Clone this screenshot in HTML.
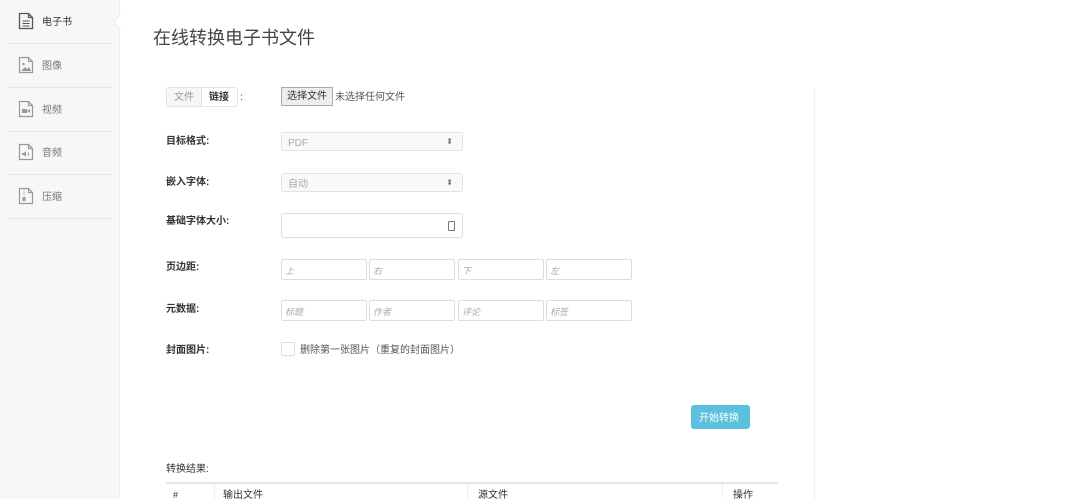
<!DOCTYPE html>
<html><head><meta charset="utf-8"><style>
*{margin:0;padding:0;box-sizing:border-box}
body{width:1079px;height:499px;overflow:hidden;background:#fff;font-family:"Liberation Sans","Noto Sans CJK SC",sans-serif;position:relative;color:#333;line-height:1.4}
.side{position:absolute;left:0;top:0;width:120px;height:499px;background:#f7f7f7;border-right:1px solid #ececec}
.item{position:absolute;left:8px;width:104px;height:44px;border-bottom:1px solid #e6e6e6;font-size:10px;color:#777}
.item span{position:absolute;left:34px;top:16px}
.item svg{position:absolute;left:10px;top:12px}
.notch{position:absolute;left:113px;top:14px;width:0;height:0;border-top:8px solid transparent;border-bottom:8px solid transparent;border-right:8px solid #e6e6e6}
.notch2{position:absolute;left:114px;top:15px;width:0;height:0;border-top:7px solid transparent;border-bottom:7px solid transparent;border-right:7px solid #fff}
.a{position:absolute;white-space:nowrap}
h1{position:absolute;left:153px;top:26px;font-size:18px;font-weight:normal;color:#444;line-height:1.4}
.lbl{position:absolute;left:166px;font-size:10px;font-weight:bold;color:#333}
.sel{position:absolute;left:281px;width:182px;height:19px;border:1px solid #e3e3e3;border-radius:3px;background:#f9f9f9;font-size:10px;color:#aaa;padding:4px 6px;overflow:hidden}
.sel i{position:absolute;right:9px;top:3px;font-style:normal;font-size:8px;color:#777}
.inp{position:absolute;width:86px;height:21px;border:1px solid #ddd;border-radius:2px;font-size:9px;color:#aaa;font-style:italic;padding:5px 3px;overflow:hidden}
</style></head><body>
<div class="side">
<div class="item" style="top:0"><svg width="16" height="18" viewBox="0 0 16 18"><path d="M1.5 1.5h9l4 4v11h-13z M10.5 1.5v4h4" fill="none" stroke="#555" stroke-width="1.3"/><path d="M4.5 9h7M4.5 11.5h7M4.5 14h7" stroke="#555" stroke-width="1.1"/></svg><span style="color:#333">电子书</span></div>
<div class="item" style="top:44px"><svg width="16" height="18" viewBox="0 0 16 18"><path d="M1.5 1.5h9l4 4v11h-13z M10.5 1.5v4h4" fill="none" stroke="#999" stroke-width="1.2"/><circle cx="5.5" cy="8" r="1.3" fill="#999"/><path d="M3 15l4-4 2 2 2-2 2 4z" fill="#999"/></svg><span>图像</span></div>
<div class="item" style="top:88px"><svg width="16" height="18" viewBox="0 0 16 18"><path d="M1.5 1.5h9l4 4v11h-13z M10.5 1.5v4h4" fill="none" stroke="#999" stroke-width="1.2"/><rect x="4" y="9" width="5" height="4" fill="#999"/><path d="M9 11l3-2v4z" fill="#999"/></svg><span>视频</span></div>
<div class="item" style="top:131px"><svg width="16" height="18" viewBox="0 0 16 18"><path d="M1.5 1.5h9l4 4v11h-13z M10.5 1.5v4h4" fill="none" stroke="#999" stroke-width="1.2"/><path d="M4 10h2l2-2v6l-2-2H4z" fill="#999"/><path d="M10 9.5q1 1.5 0 3" fill="none" stroke="#999"/></svg><span>音频</span></div>
<div class="item" style="top:175px"><svg width="16" height="18" viewBox="0 0 16 18"><path d="M1.5 1.5h9l4 4v11h-13z M10.5 1.5v4h4" fill="none" stroke="#999" stroke-width="1.2"/><path d="M6 3v6" stroke="#999" stroke-dasharray="1 1"/><rect x="4.5" y="10" width="3" height="4" fill="#999"/></svg><span>压缩</span></div>
</div>
<div class="notch"></div><div class="notch2"></div>
<h1>在线转换电子书文件</h1>
<div class="a" style="left:814px;top:88px;width:1px;height:411px;background:#eee"></div>
<div class="a" style="left:166px;top:87px;width:72px;height:20px;border:1px solid #e3e3e3;border-radius:3px;font-size:10px;"><span class="a" style="left:0;top:0;width:35px;height:18px;background:#f5f5f5;color:#999;padding:3px 7px;border-right:1px solid #e3e3e3">文件</span><span class="a" style="left:42px;top:3px;color:#333;font-weight:bold">链接</span></div>
<span class="a" style="left:240px;top:91px;font-size:10px">:</span>
<div class="a" style="left:281px;top:87px;width:52px;height:19px;border:1px solid #aaa;background:#eee;font-size:10px;padding:2px 5px;color:#333">选择文件</div>
<span class="a" style="left:335px;top:91px;font-size:10px;color:#555">未选择任何文件</span>
<div class="lbl" style="top:135px">目标格式:</div>
<div class="sel" style="top:132px">PDF<i>⬍</i></div>
<div class="lbl" style="top:176px">嵌入字体:</div>
<div class="sel" style="top:173px">自动<i>⬍</i></div>
<div class="lbl" style="top:215px">基础字体大小:</div>
<div class="a" style="left:281px;top:213px;width:182px;height:25px;border:1px solid #ddd;border-radius:3px"><span class="a" style="right:7px;top:7px;width:7px;height:10px;border:1px solid #777;border-radius:1px"></span></div>
<div class="lbl" style="top:261px">页边距:</div>
<div class="inp" style="left:281px;top:259px">上</div><div class="inp" style="left:369px;top:259px">右</div><div class="inp" style="left:458px;top:259px">下</div><div class="inp" style="left:546px;top:259px">左</div>
<div class="lbl" style="top:303px">元数据:</div>
<div class="inp" style="left:281px;top:300px">标题</div><div class="inp" style="left:369px;top:300px">作者</div><div class="inp" style="left:458px;top:300px">评论</div><div class="inp" style="left:546px;top:300px">标签</div>
<div class="lbl" style="top:344px">封面图片:</div>
<div class="a" style="left:281px;top:342px;width:14px;height:14px;border:1px solid #ddd;border-radius:2px"></div>
<span class="a" style="left:300px;top:344px;font-size:10px;color:#555">删除第一张图片（重复的封面图片）</span>
<div class="a" style="left:691px;top:405px;width:59px;height:24px;background:#5bc0de;border-radius:3px;color:#fff;font-size:10px;padding:7px 8px">开始转换</div>
<span class="a" style="left:166px;top:463px;font-size:10px;color:#333">转换结果:</span>
<div class="a" style="left:166px;top:482px;width:612px;height:2px;background:#e6e6e6"></div>
<div class="a" style="left:214px;top:484px;width:1px;height:15px;background:#eee"></div>
<div class="a" style="left:467px;top:484px;width:1px;height:15px;background:#eee"></div>
<div class="a" style="left:722px;top:484px;width:1px;height:15px;background:#eee"></div>
<span class="a" style="left:173px;top:489px;font-size:9px">#</span>
<span class="a" style="left:223px;top:489px;font-size:10px">输出文件</span>
<span class="a" style="left:478px;top:489px;font-size:10px">源文件</span>
<span class="a" style="left:733px;top:489px;font-size:10px">操作</span>
</body></html>
